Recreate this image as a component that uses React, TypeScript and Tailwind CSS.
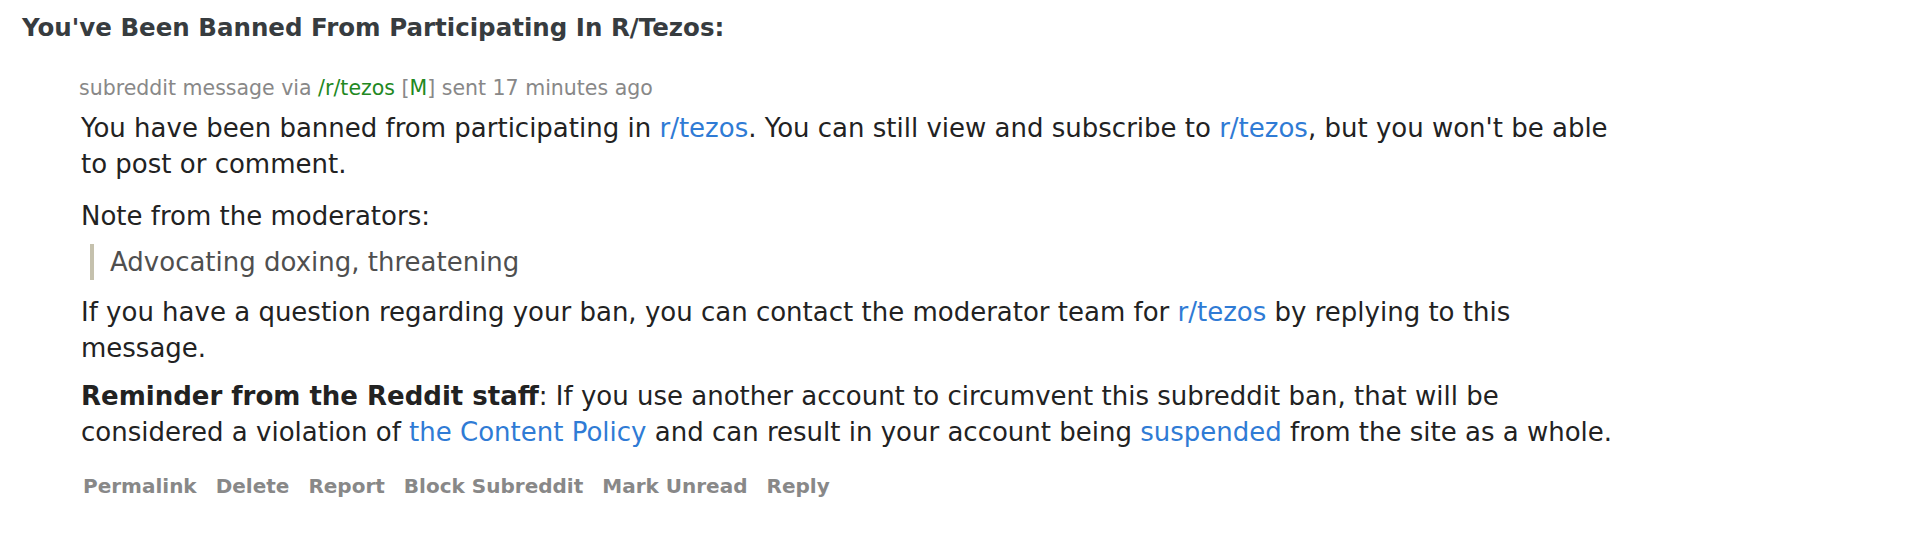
const linkCls = 'text-[#2f7bd5]';

function Para({ className = '', children }: { className?: string; children: React.ReactNode }) {
  return <p className={`text-[26px] leading-[36px] text-[#222] ${className}`}>{children}</p>;
}

export default function App() {
  const actions = ['Permalink', 'Delete', 'Report', 'Block Subreddit', 'Mark Unread', 'Reply'];

  return (
    <div
      className="min-h-screen w-full bg-white pt-[12px]"
      style={{ fontFamily: '"DejaVu Sans", Verdana, sans-serif' }}
    >
      <h1 className="pl-[22px] text-[24.5px] font-bold leading-[32px] text-[#373c3f]">
        You&apos;ve Been Banned From Participating In R/Tezos:
      </h1>

      <div className="pl-[79px] pt-[32px]">
        <div className="text-[20.5px] leading-[24px] text-[#888]">
          subreddit message via <span className="text-[#228822]">/r/tezos</span>{' '}
          <span>[</span>
          <span className="text-[#228822]">M</span>
          <span>]</span> sent 17 minutes ago
        </div>

        <div className="w-[1550px] pl-[2px] pt-[10px]">
          <Para>
            You have been banned from participating in <span className={linkCls}>r/tezos</span>. You can
            still view and subscribe to <span className={linkCls}>r/tezos</span>, but you won&apos;t be able
            to post or comment.
          </Para>
          <Para className="mt-[16px]">Note from the moderators:</Para>
          <blockquote className="mt-[10px] ml-[9px] border-l-[4px] border-[#c5c1ad] pl-[16px]">
            <p className="text-[26px] leading-[36px] text-[#4f4f4f]">Advocating doxing, threatening</p>
          </blockquote>
          <Para className="mt-[14px]">
            If you have a question regarding your ban, you can contact the moderator team for{' '}
            <span className={linkCls}>r/tezos</span> by replying to this message.
          </Para>
          <Para className="mt-[12px]">
            <strong className="font-bold">Reminder from the Reddit staff</strong>: If you use another account
            to circumvent this subreddit ban, that will be considered a violation of{' '}
            <span className={linkCls}>the Content Policy</span> and can result in your account being{' '}
            <span className={linkCls}>suspended</span> from the site as a whole.
          </Para>
        </div>

        <ul className="mt-[24px] flex gap-x-[19px] pl-[4px] text-[20px] font-bold leading-[24px] text-[#888]">
          {actions.map((a) => (
            <li key={a}>{a}</li>
          ))}
        </ul>
      </div>
    </div>
  );
}
